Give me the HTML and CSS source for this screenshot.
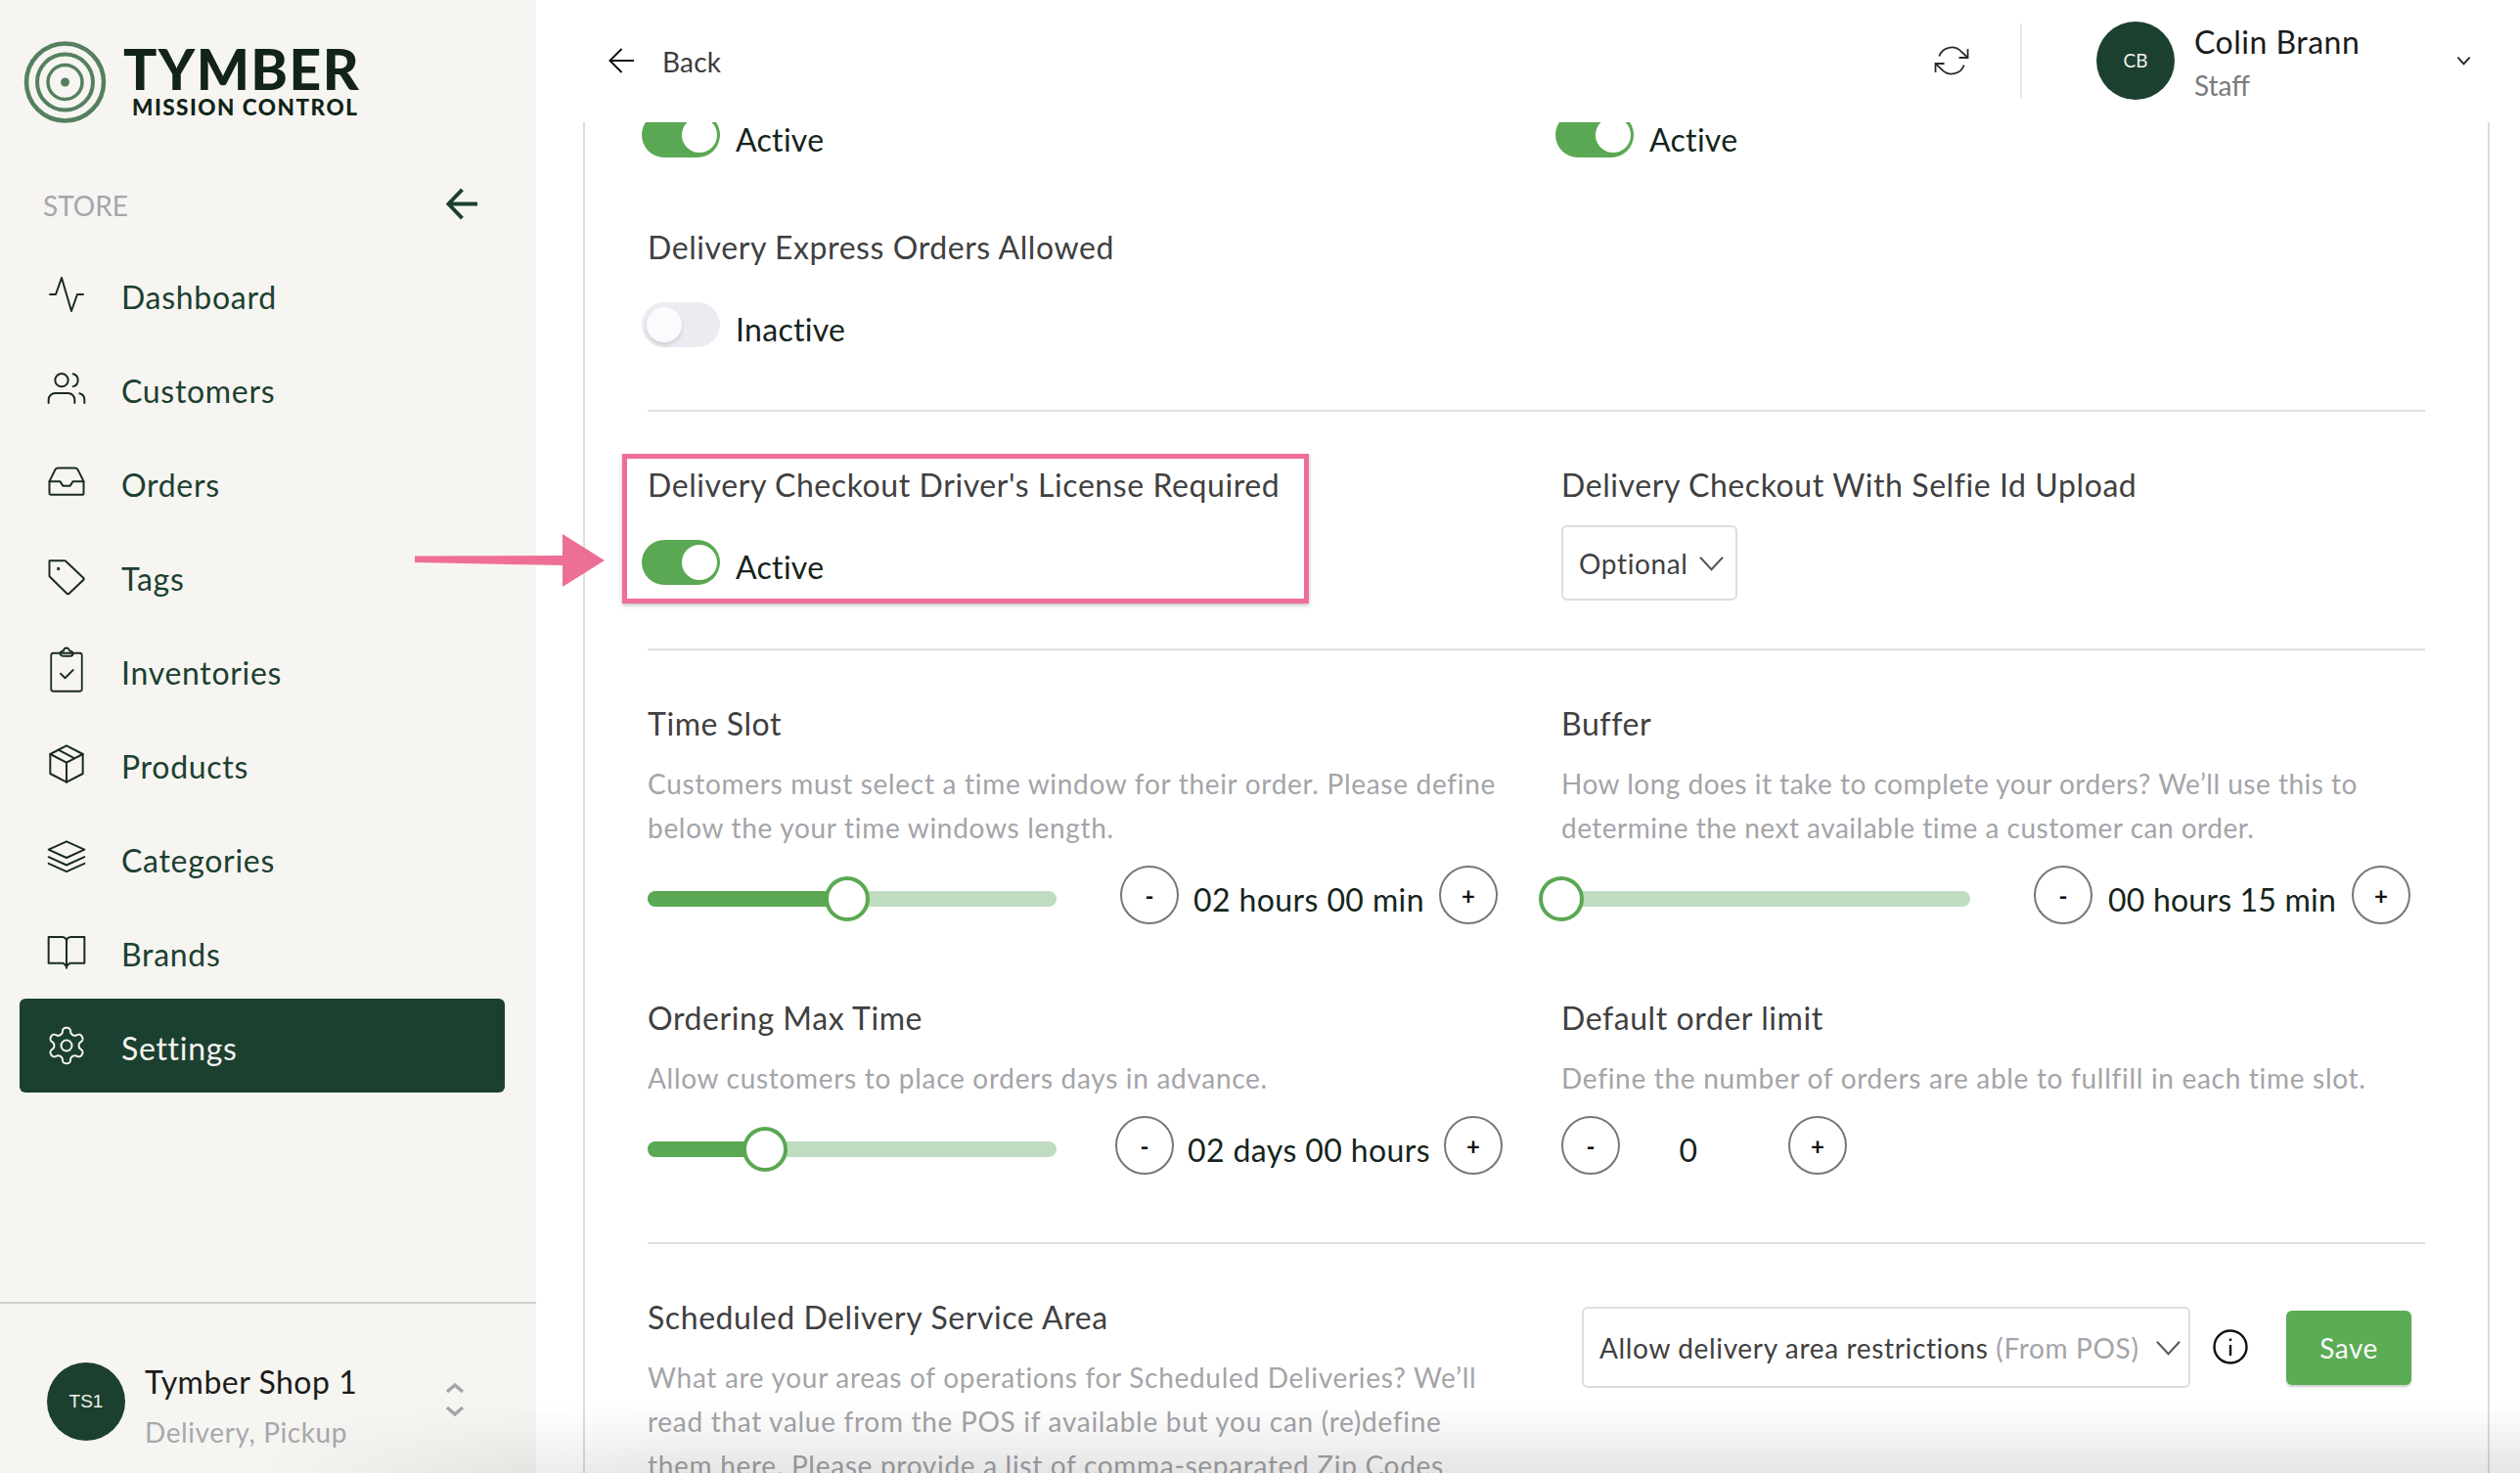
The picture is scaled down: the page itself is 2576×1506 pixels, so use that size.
FILE: index.html
```html
<!DOCTYPE html>
<html lang="en">
<head>
<meta charset="utf-8">
<title>Tymber Mission Control</title>
<link rel="stylesheet" href="styles.css">
</head>
<body>
<div class="app">
  <aside class="sidebar">
    <div class="brand">
      <svg class="brand-mark" viewBox="0 0 84 84" fill="none" stroke="#55805f"><circle cx="42" cy="42" r="39.5" stroke-width="4.5"/><circle cx="42" cy="42" r="28.5" stroke-width="4"/><circle cx="42" cy="42" r="17.5" stroke-width="3.5"/><circle cx="42" cy="42" r="4.5" fill="#55805f" stroke="none"/></svg>
      <div class="brand-text"><div class="brand-name">TYMBER</div><div class="brand-sub">MISSION CONTROL</div></div>
    </div>
    <div class="store-row">
      <span class="store-label">STORE</span>
      <svg class="collapse" viewBox="0 0 34 34" fill="none" stroke="#1c4030" stroke-width="4"><path d="M33 17H3M17 2 2.5 17 17 32"/></svg>
    </div>
    <nav class="nav">
      <a class="nav-item"><svg class="ico ico-pulse" viewBox="0 0 36 36"><path d="M1 18h6l6-17 10 34 6-17h6"/></svg><span>Dashboard</span></a>
      <a class="nav-item"><svg class="ico" viewBox="0 0 24 24"><path d="M17 21v-2a4 4 0 0 0-4-4H5a4 4 0 0 0-4 4v2"/><circle cx="9" cy="7" r="4"/><path d="M23 21v-2a4 4 0 0 0-3-3.87"/><path d="M16 3.13a4 4 0 0 1 0 7.75"/></svg><span>Customers</span></a>
      <a class="nav-item"><svg class="ico" viewBox="0 0 24 24"><path d="M1.5 11.5 5 4.4A2 2 0 0 1 6.8 3.3h10.4A2 2 0 0 1 19 4.4l3.5 7.1v7.2a1 1 0 0 1-1 1h-19a1 1 0 0 1-1-1z"/><path d="M1.5 11.5H8l1.8 2.7h4.4l1.8-2.7h6.500"/></svg><span>Orders</span></a>
      <a class="nav-item"><svg class="ico" viewBox="0 0 24 24"><path d="M1.500 2.500h9.300a1 1 0 0 1 .7.3l10.800 10.200a1 1 0 0 1 0 1.400l-8.700 8.200a1 1 0 0 1-1.400 0L1.800 12.500a1 1 0 0 1-.3-.7z"/><circle cx="7" cy="7.500" r=".4"/></svg><span>Tags</span></a>
      <a class="nav-item"><svg class="ico ico-tall" viewBox="0 0 24 32"><rect x="1.500" y="4.500" width="21" height="26" rx="1.500"/><path d="M7.500 4.500a2 2 0 0 0 2 2h5a2 2 0 0 0 2-2 2.500 2.500 0 0 0-2.500-1.500 2 2 0 0 0-4 0 2.500 2.500 0 0 0-2.500 1.500z"/><path d="m8 18.500 3 3 5.500-5.500"/></svg><span>Inventories</span></a>
      <a class="nav-item"><svg class="ico" viewBox="0 0 24 24"><path d="M12 .8 22 6v12l-10 5.200L2 18V6z"/><path d="m2 6 10 5.200L22 6M12 11.200v12M7 3.400l10 5.200"/></svg><span>Products</span></a>
      <a class="nav-item"><svg class="ico" viewBox="0 0 24 24"><path d="M12 2 23 7l-11 5L1 7z"/><path d="m1 11.500 11 5 11-5M1 15.500l11 5 11-5"/></svg><span>Categories</span></a>
      <a class="nav-item"><svg class="ico" viewBox="0 0 24 24"><path d="M1 3h8.500a2.500 2.500 0 0 1 2.500 2.500V21l-.0 1M23 3h-8.500A2.500 2.500 0 0 0 12 5.500M1 3v16h9l2 2 2-2h9V3"/></svg><span>Brands</span></a>
      <a class="nav-item is-active"><svg class="ico" viewBox="0 0 24 24"><path d="M12.220 2h-.44a2 2 0 0 0-2 2v.18a2 2 0 0 1-1 1.730l-.43.25a2 2 0 0 1-2 0l-.15-.08a2 2 0 0 0-2.730.73l-.22.38a2 2 0 0 0 .73 2.730l.15.1a2 2 0 0 1 1 1.720v.51a2 2 0 0 1-1 1.740l-.15.09a2 2 0 0 0-.73 2.730l.22.38a2 2 0 0 0 2.730.73l.15-.08a2 2 0 0 1 2 0l.43.25a2 2 0 0 1 1 1.730V20a2 2 0 0 0 2 2h.44a2 2 0 0 0 2-2v-.18a2 2 0 0 1 1-1.730l.43-.25a2 2 0 0 1 2 0l.15.08a2 2 0 0 0 2.730-.73l.22-.39a2 2 0 0 0-.73-2.730l-.15-.08a2 2 0 0 1-1-1.740v-.5a2 2 0 0 1 1-1.740l.15-.09a2 2 0 0 0 .73-2.730l-.22-.38a2 2 0 0 0-2.730-.73l-.15.08a2 2 0 0 1-2 0l-.43-.25a2 2 0 0 1-1-1.730V4a2 2 0 0 0-2-2z"/><circle cx="12" cy="12" r="3"/></svg><span>Settings</span></a>
    </nav>
    <div class="shop">
      <div class="avatar">TS1</div>
      <div class="shop-info"><div class="shop-name">Tymber Shop 1</div><div class="shop-type">Delivery, Pickup</div></div>
      <svg class="shop-switch" viewBox="0 0 20 40" fill="none" stroke="#a5a5aa" stroke-width="3.500"><path d="m2 12 8-7 8 7M2 28l8 7 8-7"/></svg>
    </div>
  </aside>

  <main class="main">
    <header class="topbar">
      <svg class="back-arrow" viewBox="0 0 26 26" fill="none" stroke="#111" stroke-width="2"><path d="M26 13H1.500M13.500 1 1.500 13l12 12"/></svg>
      <span class="back-text">Back</span>
      <div class="topbar-right">
        <svg class="refresh" viewBox="0 0 24 24" fill="none" stroke="#2a2a2a" stroke-width="1.200"><path d="M23 4v6h-6M1 20v-6h6"/><path d="M3.510 9a9 9 0 0 1 14.850-3.360L23 10M1 14l4.640 4.360A9 9 0 0 0 20.490 15"/></svg>
        <span class="vline"></span>
        <div class="avatar user-avatar">CB</div>
        <div class="user"><div class="user-name">Colin Brann</div><div class="user-role">Staff</div></div>
        <svg class="user-chevron" viewBox="0 0 16 10" fill="none" stroke="#222" stroke-width="2"><path d="m1.500 1.500 6.500 7 6.500-7"/></svg>
      </div>
    </header>

    <section class="panel">
      <div class="form">
        <div class="grid">
          <div class="toggle-row"><span class="toggle is-on"><i></i></span><span class="toggle-label">Active</span></div>
          <div class="toggle-row"><span class="toggle is-on"><i></i></span><span class="toggle-label">Active</span></div>
        </div>

        <h3 class="title title-express">Delivery Express Orders Allowed</h3>
        <div class="toggle-row toggle-after-title"><span class="toggle"><i></i></span><span class="toggle-label">Inactive</span></div>
        <hr class="rule rule-first">

        <div class="grid section">
          <div class="field">
            <h3 class="title">Delivery Checkout Driver's License Required</h3>
            <div class="toggle-row toggle-after-title"><span class="toggle is-on"><i></i></span><span class="toggle-label">Active</span></div>
            <div class="highlight"></div>
          </div>
          <div class="field">
            <h3 class="title">Delivery Checkout With Selfie Id Upload</h3>
            <div class="select select-small"><span>Optional</span><svg class="sel-chev" viewBox="0 0 26 16" fill="none" stroke="#555" stroke-width="2"><path d="m1 1.500 12 13 12-13"/></svg></div>
          </div>
        </div>
        <hr class="rule rule-second">

        <div class="grid section">
          <div class="field">
            <h3 class="title">Time Slot</h3>
            <p class="desc">Customers must select a time window for their order. Please define<br>below the your time windows length.</p>
            <div class="control-row">
              <div class="slider"><div class="slider-fill" style="width:48.7%"></div><span class="slider-knob" style="left:48.7%"></span></div>
              <button class="step step-first">-</button><span class="value">02 hours 00 min</span><button class="step">+</button>
            </div>
          </div>
          <div class="field">
            <h3 class="title">Buffer</h3>
            <p class="desc desc-tight">How long does it take to complete your orders? We’ll use this to<br>determine the next available time a customer can order.</p>
            <div class="control-row">
              <div class="slider"><div class="slider-fill" style="width:0"></div><span class="slider-knob" style="left:0"></span></div>
              <button class="step step-first">-</button><span class="value value-buffer">00 hours 15 min</span><button class="step">+</button>
            </div>
          </div>
          <div class="field field-next">
            <h3 class="title">Ordering Max Time</h3>
            <p class="desc">Allow customers to place orders days in advance.</p>
            <div class="control-row">
              <div class="slider"><div class="slider-fill" style="width:28.7%"></div><span class="slider-knob" style="left:28.7%"></span></div>
              <button class="step step-first step-wide">-</button><span class="value value-wide">02 days 00 hours</span><button class="step">+</button>
            </div>
          </div>
          <div class="field field-next">
            <h3 class="title">Default order limit</h3>
            <p class="desc">Define the number of orders are able to fullfill in each time slot.</p>
            <div class="control-row">
              <button class="step">-</button><span class="value value-count">0</span><button class="step">+</button>
            </div>
          </div>
        </div>
        <hr class="rule rule-third">

        <div class="grid section">
          <div class="field">
            <h3 class="title">Scheduled Delivery Service Area</h3>
            <p class="desc">What are your areas of operations for Scheduled Deliveries? We’ll<br>read that value from the POS if available but you can (re)define<br>them here. Please provide a list of comma-separated Zip Codes</p>
          </div>
          <div class="area-actions">
            <div class="select select-wide"><span>Allow delivery area restrictions <em>(From POS)</em></span><svg class="sel-chev" viewBox="0 0 26 16" fill="none" stroke="#555" stroke-width="2"><path d="m1 1.500 12 13 12-13"/></svg></div>
            <svg class="info" viewBox="0 0 36 36" fill="none" stroke="#111" stroke-width="2.400"><circle cx="18" cy="18" r="16.500"/><path d="M18 16v11M18 9.500v2.500"/></svg>
            <button class="save">Save</button>
          </div>
        </div>
      </div>
    </section>
  </main>
  <svg class="callout" viewBox="0 0 196 56"><path d="M1 22.500 152 22v-22l43 27-43 27V32L1 29z" fill="#ee6f95"/></svg>
</div>
<div class="bottom-fade"></div>
</body>
</html>
```

FILE: styles.css
```css
* { box-sizing: border-box; }
html, body { margin: 0; height: 1506px; overflow: hidden; background: #fff; }
body { font-family: "Lato", "Open Sans", sans-serif; color: #13241a; }
.app { display: flex; height: 1506px; position: relative; }

/* Sidebar */
.sidebar { width: 548px; flex: none; background: #f6f5f2; display: flex; flex-direction: column; }
.brand { display: flex; align-items: flex-start; padding: 42px 0 0 24px; height: 192px; }
.brand-mark { width: 85px; height: 84px; flex: none; }
.brand-text { margin-left: 17px; display: flex; flex-direction: column; }
.brand-name { font-family: "Lato", sans-serif; font-weight: 900; font-size: 57px; line-height: 48px; margin-top: 4px; color: #122418; letter-spacing: 1.4px; }
.brand-sub { font-weight: 900; font-size: 22.5px; line-height: 24px; margin: 4px 0 0 9px; color: #122418; letter-spacing: 1.5px; white-space: nowrap; }
.store-row { display: flex; align-items: center; justify-content: space-between; padding: 0 59px 0 44px; height: 32px; }
.store-label { font-size: 28px; color: #a6a6ab; position: relative; top: 2px; }
.collapse { width: 33px; height: 33px; }
.nav { display: flex; flex-direction: column; padding: 29px 32px 0 20px; }
.nav-item { display: flex; align-items: center; height: 96px; border-radius: 6px; padding-left: 30px; color: #1c4030; font-size: 32px; letter-spacing: .7px; }
.nav-item span { margin-left: 38px; padding-top: 5px; }
.ico { width: 40px; height: 40px; margin: 0 -2px; flex: none; fill: none; stroke: #1a2a22; stroke-width: 1.200; stroke-linejoin: round; stroke-linecap: round; }
.ico-pulse { width: 36px; height: 36px; margin: 0; stroke-width: 2; }
.ico-tall { height: 48px; }
.nav-item.is-active { background: #1c4030; color: #f4f4f0; }
.nav-item.is-active .ico { stroke: #f4f4f0; width: 44px; height: 44px; margin: 0 -4px; stroke-width: 1.100; }
.shop { margin-top: auto; border-top: 2px solid #cfcfcf; height: 175px; display: flex; align-items: flex-start; padding: 60px 0 0 48px; }
.avatar { width: 80px; height: 80px; border-radius: 50%; background: #1c4030; color: #f1f1ee; font-family: "Liberation Sans", sans-serif; font-size: 19px; display: flex; align-items: center; justify-content: center; flex: none; }
.shop-info { margin-left: 20px; }
.shop-name { font-size: 32px; line-height: 40px; color: #1c1c1c; letter-spacing: .5px; }
.shop-type { font-size: 28px; line-height: 40px; margin-top: 11px; color: #a8a8ad; letter-spacing: .6px; }
.shop-switch { width: 20px; height: 40px; margin: 18px 0 0 auto; margin-right: 73px; }

/* Top bar */
.main { flex: 1; min-width: 0; display: flex; flex-direction: column; }
.topbar { height: 125px; flex: none; display: flex; align-items: center; padding: 0 50px 0 74px; }
.back-arrow { width: 26px; height: 26px; margin-top: -1px; }
.back-text { margin-left: 29px; font-size: 28px; color: #3c3c3c; letter-spacing: .2px; }
.topbar-right { margin-left: auto; margin-top: -2px; display: flex; align-items: center; }
.refresh { width: 40px; height: 36px; }
.vline { width: 2px; height: 76px; background: #e8e8ec; margin: 0 76px 0 50px; }
.user-avatar { font-family: "Lato", sans-serif; }
.user { margin-left: 20px; width: 268px; padding-top: 4px; }
.user-name { font-size: 32px; line-height: 40px; color: #1b1b1b; letter-spacing: .5px; }
.user-role { font-size: 28px; line-height: 36px; margin-top: 6px; color: #7b7b7b; }
.user-chevron { width: 15px; height: 10px; }

/* Panel */
.panel { flex: 1; margin: 0 31px 0 48px; border-left: 2px solid #dededa; border-right: 2px solid #dededa; overflow: hidden; }
.form { padding: 0 64px; margin-top: -10px; }
.grid { display: grid; grid-template-columns: 934px 1fr; }
.section { padding-top: 53px; }
.field { position: relative; min-width: 0; }
.field-next { padding-top: 74px; }
.title { margin: 0; font-weight: 400; font-size: 32px; line-height: 44px; color: #404040; white-space: nowrap; letter-spacing: .58px; }
.title-express { margin-top: 70px; }
.desc { margin: 17px 0 0; font-size: 28px; line-height: 45px; color: #a4a4a9; white-space: nowrap; letter-spacing: .7px; }
.desc-tight { letter-spacing: .5px; }
.rule { border: 0; height: 2px; background: #dfdfdb; margin: 0; }
.rule-first { margin-top: 64px; }
.rule-second { margin-top: 49px; }
.rule-third { margin-top: 69px; }

/* Toggle */
.toggle-row { display: flex; align-items: flex-start; margin-left: -6px; height: 46px; }
.toggle-after-title { margin-top: 34px; }
.toggle { width: 80px; height: 46px; border-radius: 23px; background: #ebecf1; display: flex; align-items: center; padding: 0 5px; flex: none; }
.toggle i { width: 36px; height: 36px; border-radius: 50%; background: #fbfbfd; box-shadow: 0 3px 4px rgba(0,0,0,.12); }
.toggle.is-on { background: #5aa853; justify-content: flex-end; padding: 0 3px; }
.toggle.is-on i { background: #fff; box-shadow: none; }
.toggle-label { margin-left: 16px; font-size: 32px; line-height: 36px; padding-top: 10px; color: #15241b; letter-spacing: .3px; }

/* Annotation */
.highlight { position: absolute; left: -26px; top: -10px; width: 702px; height: 153px; border: 5px solid #ee6f95; box-shadow: 0 2px 4px rgba(0,0,0,.25); pointer-events: none; }
.callout { position: absolute; left: 423px; top: 546px; width: 196px; height: 56px; }

/* Select */
.select { display: flex; align-items: center; justify-content: space-between; border: 2px solid #dcdce3; border-radius: 6px; font-size: 28px; color: #404040; background: #fff; white-space: nowrap; letter-spacing: .65px; }
.select em { font-style: normal; color: #a4a4a9; }
.select-small { width: 180px; height: 77px; margin-top: 19px; padding: 0 12px 0 16px; }
.select-wide { width: 622px; height: 83px; padding: 0 8px 0 16px; }
.sel-chev { width: 25px; height: 16px; flex: none; }
.area-actions { display: flex; align-items: center; height: 83px; margin: 11px 0 0 21px; }
.info { width: 36px; height: 36px; margin: -2px 0 0 23px; }
.save { width: 128px; height: 76px; margin-left: 39px; border: 0; border-radius: 6px; background: #5aad55; color: #fafafa; font: 400 28px "Lato", sans-serif; letter-spacing: .5px; box-shadow: 0 2px 2px rgba(0,0,0,.2); }

/* Slider and stepper */
.control-row { display: flex; align-items: flex-start; margin-top: 16px; }
.slider { width: 418px; height: 16px; margin-top: 26px; flex: none; position: relative; border-radius: 8px; background: #c0dcc0; }
.slider-fill { height: 100%; border-radius: 8px 0 0 8px; background: #5aa853; }
.slider-knob { position: absolute; top: 50%; width: 46px; height: 46px; border-radius: 50%; border: 4px solid #5aa853; background: #fff; transform: translate(-50%, -50%); }
.step { width: 60px; height: 60px; flex: none; padding: 0; border: 2px solid #77777b; border-radius: 50%; background: #fff; color: #111; font: 700 24px "Lato", sans-serif; }
.step-first { margin-left: 65px; }
.step-wide { margin-left: 60px; }
.value { width: 266px; height: 60px; flex: none; text-align: center; font-size: 32px; line-height: 70px; color: #15241b; white-space: nowrap; letter-spacing: .4px; }
.value-buffer { width: 265px; letter-spacing: .2px; }
.value-wide { width: 276px; }
.value-count { width: 172px; padding-right: 32px; }

/* Screenshot edge shading */
.bottom-fade { position: fixed; left: 0; right: 0; bottom: 0; height: 70px; pointer-events: none; background: linear-gradient(to bottom, rgba(0,0,0,0), rgba(0,0,0,.1)); -webkit-mask-image: linear-gradient(to right, transparent 250px, #000 700px); mask-image: linear-gradient(to right, transparent 250px, #000 700px); }
```
